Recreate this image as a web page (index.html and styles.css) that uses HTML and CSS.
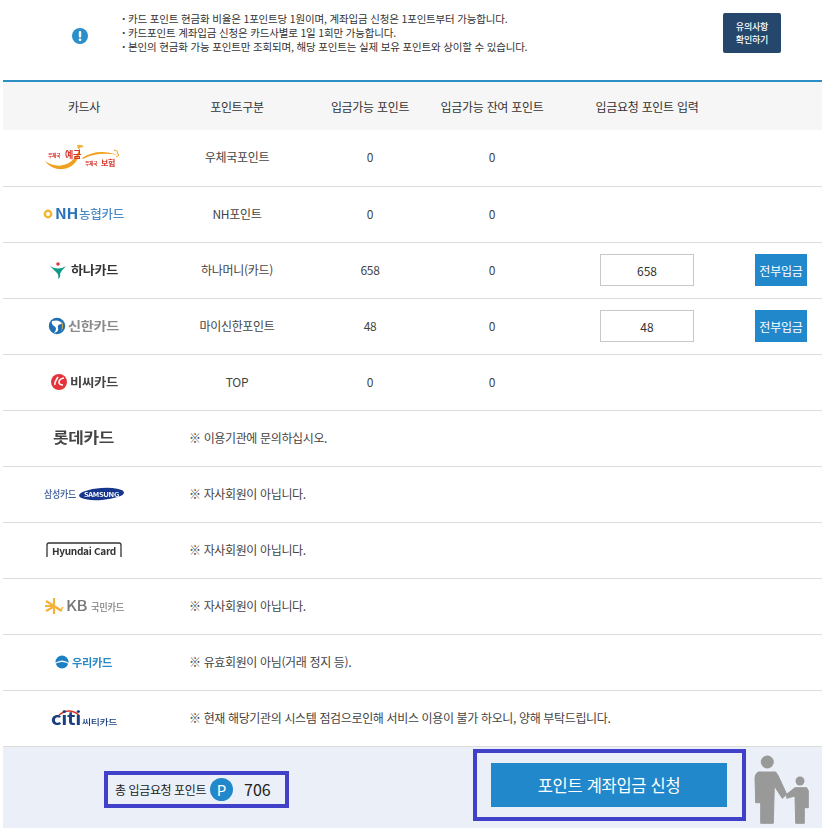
FILE: index.html
```html
<!DOCTYPE html>
<html lang="ko">
<head>
<meta charset="utf-8">
<title>포인트 계좌입금</title>
<link rel="stylesheet" href="styles.css">
</head>
<body>
<div class="page">
  <section class="notice">
    <svg class="notice-icon" width="16" height="16" viewBox="0 0 16 16"><circle cx="8" cy="8" r="8" fill="#2b8fc9"/><rect x="6.8" y="3" width="2.4" height="6.6" rx="1" fill="#fff"/><circle cx="8" cy="11.8" r="1.4" fill="#fff"/></svg>
    <ul class="notice-list">
      <li>카드 포인트 현금화 비율은 1포인트당 1원이며, 계좌입금 신청은 1포인트부터 가능합니다.</li>
      <li>카드포인트 계좌입금 신청은 카드사별로 1일 1회만 가능합니다.</li>
      <li>본인의 현금화 가능 포인트만 조회되며, 해당 포인트는 실제 보유 포인트와 상이할 수 있습니다.</li>
    </ul>
    <button class="notice-btn">유의사항<br>확인하기</button>
  </section>

  <table class="points">
    <colgroup>
      <col class="c1"><col class="c2"><col class="c3"><col class="c4"><col class="c5"><col class="c6">
    </colgroup>
    <thead>
      <tr><th>카드사</th><th>포인트구분</th><th>입금가능 포인트</th><th>입금가능 잔여 포인트</th><th>입금요청 포인트 입력</th><th></th></tr>
    </thead>
    <tbody>
      <tr>
        <td class="ctl"><svg class="logo" width="100" height="40" viewBox="0 0 100 40">
          <path d="M11 23 C22 31 40 30 46 9 C47 32 22 38 11 23Z" fill="#f0a01e"/>
          <path d="M48 20 C60 12 72 13 84 17 C72 15 60 15 49 21Z" fill="#f0a01e"/>
          <path d="M43 7 q5 -1 7 2 q-4 0 -6 2Z" fill="#f3b23a"/>
          <path d="M80 12 q5 1 3 3 q4 2 -1 4" fill="none" stroke="#f0a01e"/>
          <text class="lg lg-b" x="14" y="19" font-size="4.800" fill="#d8342c">우체국</text>
          <text class="lg lg-b" x="31" y="20" font-size="9" fill="#d8342c">예금</text>
          <text class="lg lg-b" x="51" y="27" font-size="4.800" fill="#d8342c">우체국</text>
          <text class="lg lg-b" x="67" y="28" font-size="8" fill="#d8342c">보험</text>
        </svg></td>
        <td>우체국포인트</td><td>0</td><td>0</td><td></td><td></td>
      </tr>
      <tr>
        <td class="ctl"><svg class="logo" width="100" height="40" viewBox="0 0 100 40">
          <circle cx="14" cy="20" r="3.2" fill="none" stroke="#f2b632" stroke-width="2.4"/>
          <text class="lg lg-b" x="21" y="25" font-size="14" fill="#2a73b8" textLength="23" lengthAdjust="spacingAndGlyphs">NH</text>
          <text class="lg lg-m" x="45" y="25" font-size="12" fill="#4a8ac6" textLength="45" lengthAdjust="spacingAndGlyphs">농협카드</text>
        </svg></td>
        <td>NH포인트</td><td>0</td><td>0</td><td></td><td></td>
      </tr>
      <tr>
        <td class="ctl"><svg class="logo" width="100" height="40" viewBox="0 0 100 40">
          <circle cx="24" cy="14" r="1.8" fill="#e0383c"/>
          <path d="M16 16 Q24 21 32 16 Q27 21 26 24 Q27 27 24 29 Q25 25 23 23 Q20 20 16 16Z" fill="#0f9a85"/>
          <text class="lg lg-b" x="37" y="25" font-size="12" fill="#333" textLength="47" lengthAdjust="spacingAndGlyphs">하나카드</text>
        </svg></td>
        <td>하나머니(카드)</td><td>658</td><td>0</td>
        <td class="ctl"><input class="amount" value="658"></td>
        <td class="ctl"><button class="all-btn">전부입금</button></td>
      </tr>
      <tr>
        <td class="ctl"><svg class="logo" width="100" height="40" viewBox="0 0 100 40">
          <circle cx="23" cy="20" r="8.2" fill="#1f6fb2"/>
          <path d="M18 15 Q26 13 28 18 Q23 18 24 22 Q25 26 20 27 Q24 22 20 20 Q17 18 18 15Z" fill="#fff"/>
          <path d="M27 14 Q31 20 27 26 Q29 20 27 14Z" fill="#e8b33a"/>
          <text class="lg lg-b" x="34" y="25" font-size="12" fill="#8a8a8a" textLength="51" lengthAdjust="spacingAndGlyphs">신한카드</text>
        </svg></td>
        <td>마이신한포인트</td><td>48</td><td>0</td>
        <td class="ctl"><input class="amount" value="48"></td>
        <td class="ctl"><button class="all-btn">전부입금</button></td>
      </tr>
      <tr>
        <td class="ctl"><svg class="logo" width="100" height="40" viewBox="0 0 100 40">
          <circle cx="25" cy="20" r="8" fill="#e5333b"/>
          <path d="M24 15 q-4 6 -3 8 M30 16 q-5 1 -5 4 q0 3 4 3" fill="none" stroke="#fff" stroke-width="1.5"/>
          <text class="lg lg-b" x="36" y="25" font-size="12" fill="#444" textLength="48" lengthAdjust="spacingAndGlyphs">비씨카드</text>
        </svg></td>
        <td>TOP</td><td>0</td><td>0</td><td></td><td></td>
      </tr>
      <tr>
        <td class="ctl"><svg class="logo" width="100" height="40" viewBox="0 0 100 40">
          <text class="lg lg-b" x="19" y="25" font-size="15" fill="#444" textLength="61" lengthAdjust="spacingAndGlyphs">롯데카드</text>
        </svg></td>
        <td class="msg" colspan="5">※ 이용기관에 문의하십시오.</td>
      </tr>
      <tr>
        <td class="ctl"><svg class="logo" width="100" height="40" viewBox="0 0 100 40">
          <text class="lg lg-m" x="10" y="24" font-size="10" fill="#3a5a9a" textLength="32" lengthAdjust="spacingAndGlyphs">삼성카드</text>
          <ellipse cx="67.500" cy="20" rx="22.500" ry="6" fill="#16358c" transform="rotate(-4 67.500 20)"/>
          <text class="lg lg-b" x="50" y="22.500" font-size="6.500" fill="#fff" textLength="35" lengthAdjust="spacingAndGlyphs">SAMSUNG</text>
        </svg></td>
        <td class="msg" colspan="5">※ 자사회원이 아닙니다.</td>
      </tr>
      <tr>
        <td class="ctl"><svg class="logo" width="100" height="40" viewBox="0 0 100 40">
          <path d="M13 27 L13 15 Q13 13 15 13 L85 13 Q87 13 87 15 L87 27" fill="none" stroke="#333" stroke-width="1.300"/>
          <text class="lg lg-b" x="18" y="25" font-size="9.500" fill="#333" textLength="64" lengthAdjust="spacingAndGlyphs">Hyundai Card</text>
        </svg></td>
        <td class="msg" colspan="5">※ 자사회원이 아닙니다.</td>
      </tr>
      <tr>
        <td class="ctl"><svg class="logo" width="100" height="40" viewBox="0 0 100 40">
          <path d="M20 12 V28 M12 15 L28 25 M12 25 L21 20 M11 20 H20" stroke="#f3b23a" stroke-width="2.200" fill="none"/>
          <path d="M22 21 q4 6 7 0" stroke="#f3b23a" stroke-width="1.500" fill="none"/>
          <text class="lg lg-m" x="32" y="25" font-size="14" fill="#777" textLength="21" lengthAdjust="spacingAndGlyphs">KB</text>
          <text class="lg lg-b" x="57" y="24.500" font-size="10" fill="#999" textLength="33" lengthAdjust="spacingAndGlyphs">국민카드</text>
        </svg></td>
        <td class="msg" colspan="5">※ 자사회원이 아닙니다.</td>
      </tr>
      <tr>
        <td class="ctl"><svg class="logo" width="100" height="40" viewBox="0 0 100 40">
          <circle cx="28" cy="20" r="6.500" fill="#1c7fc4"/>
          <path d="M21 21 Q28 16 35 21 L35 22 Q28 18 21 22Z" fill="#fff"/>
          <text class="lg lg-b" x="38" y="24.500" font-size="11" fill="#2a8ac8" textLength="40" lengthAdjust="spacingAndGlyphs">우리카드</text>
        </svg></td>
        <td class="msg" colspan="5">※ 유효회원이 아님(거래 정지 등).</td>
      </tr>
      <tr>
        <td class="ctl"><svg class="logo" width="100" height="40" viewBox="0 0 100 40">
          <path d="M25 17 Q35 9 45 17" fill="none" stroke="#d9372e" stroke-width="1.400"/>
          <text class="lg lg-b" x="17" y="27" font-size="18" fill="#1a3f80" textLength="30" lengthAdjust="spacingAndGlyphs">citi</text>
          <text class="lg lg-m" x="48" y="27" font-size="8.500" fill="#1a3f80" textLength="35" lengthAdjust="spacingAndGlyphs">씨티카드</text>
        </svg></td>
        <td class="msg" colspan="5">※ 현재 해당기관의 시스템 점검으로인해 서비스 이용이 불가 하오니, 양해 부탁드립니다.</td>
      </tr>
    </tbody>
  </table>

  <footer class="summary">
    <div class="total">
      <span class="total-label">총 입금요청 포인트</span>
      <span class="p-badge">P</span>
      <span class="total-value">706</span>
    </div>
    <div class="apply-frame"><button class="apply-btn">포인트 계좌입금 신청</button></div>
    <svg class="people" width="56" height="72" viewBox="0 0 56 72">
      <circle cx="13.300" cy="8" r="6.500" fill="#999"/>
      <path d="M4.300 18 H21.700 L24.300 22 L32.700 40.300 L28.300 44.300 L20.300 32 L19.300 69.300 H6.700 V48.700 H1.700 L1 23.700 Q1 20 4.300 18Z" fill="#999" stroke="#999" stroke-linejoin="round"/>
      <circle cx="46" cy="27" r="4.500" fill="#999"/>
      <path d="M41 33.700 H52.700 L54.300 37 V53.700 H50.300 V69.300 H41.700 L41 42 L32.700 44.300 V40.300 L38 36 Z" fill="#999" stroke="#999" stroke-linejoin="round"/>
    </svg>
  </footer>
</div>
</body>
</html>
```
FILE: styles.css
```css
* { box-sizing: border-box; }
html, body { margin: 0; padding: 0; background: #fff; }
body {
  font-family: "Noto Sans CJK KR", "Noto Sans", sans-serif;
  font-size: 12px;
  color: #333;
}
.page { width: 825px; height: 830px; padding: 0 3px 0 3px; }

.notice {
  height: 80px;
  display: flex;
  align-items: flex-start;
  padding-top: 12px;
}
.notice-icon { margin: 16px 0 0 69px; flex: none; }
.notice-list {
  list-style: none;
  margin: 0;
  padding: 0 0 0 34px;
  width: 635px;
  font-size: 10.500px;
  line-height: 14px;
  letter-spacing: -0.17px;
}
.notice-list li::before { content: "·"; display: inline-block; width: 6px; font-weight: 700; }
.notice-btn {
  width: 58px;
  height: 40px;
  margin: 1px 0 0 0;
  padding: 0;
  border: 0;
  border-radius: 2px;
  background: #24476b;
  color: #fff;
  font: inherit;
  font-size: 9px;
  font-weight: 500;
  line-height: 13.1px;
  letter-spacing: -0.2px;
}

.points { width: 819px; border-collapse: collapse; table-layout: fixed; border-top: 2px solid #2b8fc4; }
.c1 { width: 162px; } .c2 { width: 144px; } .c3 { width: 122px; }
.c4 { width: 122px; } .c5 { width: 188px; } .c6 { width: 81px; }
.points th {
  height: 49px;
  padding: 0;
  background: #f6f6f6;
  font-size: 12px;
  font-weight: 400;
  letter-spacing: -0.3px;
  color: #333;
}
.points td {
  height: 56px;
  padding: 0 0 2px;
  text-align: center;
  border-bottom: 1px solid #dcdcdc;
  color: #444;
  font-size: 12px;
  letter-spacing: -0.3px;
}
.points td.ctl { padding: 0; }
.points td.msg { text-align: left; padding-left: 24px; letter-spacing: -0.36px; }
.logo { display: block; margin: 0 auto; filter: blur(0.3px); }
.lg { font-family: "Noto Sans CJK KR", "Noto Sans", sans-serif; }
.lg-b { font-weight: 700; }
.lg-m { font-weight: 500; }

.amount {
  display: block;
  width: 94px;
  height: 32px;
  margin: 0 0 0 47px;
  border: 1px solid #c8c8c8;
  background: #fff;
  text-align: center;
  font: inherit;
  color: #333;
  outline: 0;
}
.all-btn {
  display: block;
  width: 52px;
  height: 32px;
  margin: 0 0 0 14px;
  padding: 0;
  border: 0;
  background: #2288cc;
  color: #fff;
  font: inherit;
  font-size: 12px;
  letter-spacing: -0.2px;
}

.summary {
  width: 819px;
  height: 81px;
  display: flex;
  align-items: flex-start;
  background: #eaeff8;
}
.total {
  display: flex;
  align-items: center;
  width: 185px;
  height: 37px;
  margin: 24px 0 0 101px;
  padding-left: 7px;
  border: 4px solid #4040c8;
}
.total-label { font-size: 12px; letter-spacing: -0.4px; color: #222; width: 95px; flex: none; white-space: nowrap; }
.p-badge {
  width: 23px;
  height: 23px;
  flex: none;
  border-radius: 50%;
  background: #2288cc;
  color: #fff;
  font-size: 15px;
  line-height: 23px;
  text-align: center;
}
.total-value { margin-left: 11px; font-size: 16px; color: #222; }
.apply-frame {
  width: 273px;
  height: 72px;
  margin: 2px 0 0 184px;
  padding: 10px 14px 10px 14px;
  border: 4px solid #4040c8;
}
.apply-btn {
  display: block;
  width: 236px;
  height: 44px;
  padding: 0;
  border: 0;
  background: #2288cc;
  color: #fff;
  font: inherit;
  font-size: 16.500px;
  letter-spacing: -0.3px;
}
.people { flex: none; margin: 7px 0 0 8px; }
```
